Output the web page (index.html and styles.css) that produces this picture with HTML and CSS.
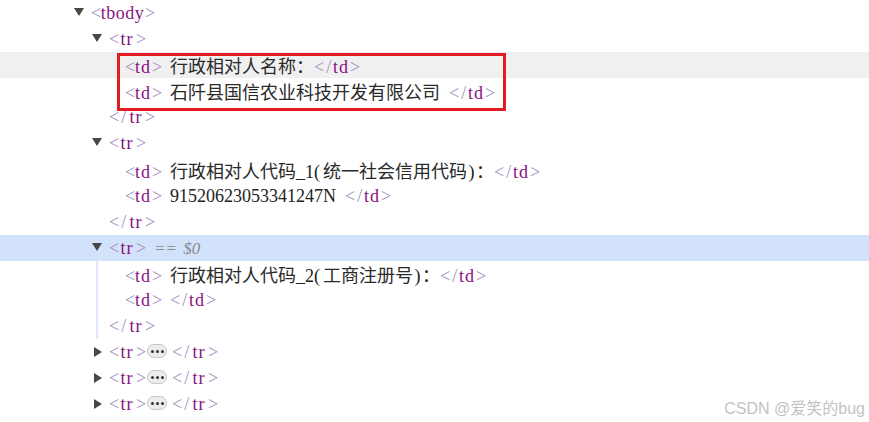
FILE: index.html
```html
<!DOCTYPE html>
<html lang="zh">
<head>
<meta charset="utf-8">
<title>Elements</title>
<link rel="stylesheet" href="styles.css">
</head>
<body>
<div class="tree">
  <div class="line lv0 arrowed"><span class="tw"><span class="tri-down"></span></span><span class="b o">&lt;</span><span class="t w5">tbody</span><span class="b o">&gt;</span></div>
  <div class="line lv1 arrowed"><span class="tw"><span class="tri-down"></span></span><span class="b o">&lt;</span><span class="t w2">tr</span><span class="b o">&gt;</span></div>
  <div class="line lv2 hover"><span class="b o">&lt;</span><span class="t w2">td</span><span class="b o">&gt;</span> <span class="c">行政相对人名称：</span><span class="b c2">&lt;/</span><span class="t w2">td</span><span class="b o">&gt;</span></div>
  <div class="line lv2"><span class="b o">&lt;</span><span class="t w2">td</span><span class="b o">&gt;</span> <span class="c">石阡县国信农业科技开发有限公司</span> <span class="b c2">&lt;/</span><span class="t w2">td</span><span class="b o">&gt;</span></div>
  <div class="line lv1"><span class="b c2">&lt;/</span><span class="t w2">tr</span><span class="b o">&gt;</span></div>
  <div class="line lv1 arrowed"><span class="tw"><span class="tri-down"></span></span><span class="b o">&lt;</span><span class="t w2">tr</span><span class="b o">&gt;</span></div>
  <div class="line lv2"><span class="b o">&lt;</span><span class="t w2">td</span><span class="b o">&gt;</span> <span class="c">行政相对人代码</span><span class="m w3">_1(</span><span class="c">统一社会信用代码</span><span class="m o">)</span><span class="c">：</span><span class="b c2">&lt;/</span><span class="t w2">td</span><span class="b o">&gt;</span></div>
  <div class="line lv2"><span class="b o">&lt;</span><span class="t w2">td</span><span class="b o">&gt;</span> <span class="num">91520623053341247N</span> <span class="b c2">&lt;/</span><span class="t w2">td</span><span class="b o">&gt;</span></div>
  <div class="line lv1"><span class="b c2">&lt;/</span><span class="t w2">tr</span><span class="b o">&gt;</span></div>
  <div class="line lv1 arrowed selected"><span class="tw"><span class="tri-down"></span></span><span class="b o">&lt;</span><span class="t w2">tr</span><span class="b o">&gt;</span> <span class="eq">== $0</span></div>
  <div class="group">
    <div class="line g2"><span class="b o">&lt;</span><span class="t w2">td</span><span class="b o">&gt;</span> <span class="c">行政相对人代码</span><span class="m w3">_2(</span><span class="c">工商注册号</span><span class="m o">)</span><span class="c">：</span><span class="b c2">&lt;/</span><span class="t w2">td</span><span class="b o">&gt;</span></div>
    <div class="line g2"><span class="b o">&lt;</span><span class="t w2">td</span><span class="b o">&gt;</span> <span class="b c2">&lt;/</span><span class="t w2">td</span><span class="b o">&gt;</span></div>
    <div class="line g1"><span class="b c2">&lt;/</span><span class="t w2">tr</span><span class="b o">&gt;</span></div>
  </div>
  <div class="line lv1 arrowed"><span class="tw"><span class="tri-right"></span></span><span class="b o">&lt;</span><span class="t w2">tr</span><span class="b o">&gt;</span><span class="pill"><i></i><i></i><i></i></span><span class="b c2">&lt;/</span><span class="t w2">tr</span><span class="b o">&gt;</span></div>
  <div class="line lv1 arrowed"><span class="tw"><span class="tri-right"></span></span><span class="b o">&lt;</span><span class="t w2">tr</span><span class="b o">&gt;</span><span class="pill"><i></i><i></i><i></i></span><span class="b c2">&lt;/</span><span class="t w2">tr</span><span class="b o">&gt;</span></div>
  <div class="line lv1 arrowed"><span class="tw"><span class="tri-right"></span></span><span class="b o">&lt;</span><span class="t w2">tr</span><span class="b o">&gt;</span><span class="pill"><i></i><i></i><i></i></span><span class="b c2">&lt;/</span><span class="t w2">tr</span><span class="b o">&gt;</span></div>
  <div class="redbox"></div>
</div>
<div class="watermark">CSDN @爱笑的bug</div>
</body>
</html>
```

FILE: styles.css
```css
html, body {
  margin: 0;
  padding: 0;
  background: #ffffff;
}
body {
  width: 869px;
  height: 422px;
  overflow: hidden;
  position: relative;
}
.tree {
  position: relative;
  padding-top: 0;
  font-family: "Liberation Serif", "Noto Sans CJK SC", serif;
  font-size: 18px;
  color: #222222;
  word-spacing: 4.5px;
}
.line {
  height: 26.1px;
  line-height: 26.1px;
  white-space: pre;
}
.lv0 { padding-left: 91px; }
.lv1 { padding-left: 109px; }
.lv2 { padding-left: 125px; }
.lv0.arrowed { padding-left: 74px; }
.lv1.arrowed { padding-left: 92px; }
.tw {
  display: inline-block;
  width: 17px;
  height: 10px;
  vertical-align: 1px;
}
.tri-down {
  display: block;
  width: 0;
  height: 0;
  border-left: 5px solid transparent;
  border-right: 5px solid transparent;
  border-top: 8px solid #474747;
}
.tri-right {
  display: block;
  width: 0;
  height: 0;
  margin-left: 2px;
  border-top: 5px solid transparent;
  border-bottom: 5px solid transparent;
  border-left: 8px solid #474747;
}
.b, .t, .m {
  display: inline-block;
  text-align: center;
  word-spacing: 0;
}
.o { width: 9px; }
.c2 { width: 18px; letter-spacing: 2px; text-align: right; }
.w2 { width: 18px; letter-spacing: 1px; }
.w3 { width: 27px; text-align: left; }
.w5 { width: 45px; letter-spacing: 0.5px; }
.b { color: #a28fbf; }
.t { color: #881280; }
.c {
  font-family: "Noto Sans CJK SC", sans-serif;
  font-size: 18px;
  color: #2a2a2a;
}
.hover { background: #f0f0f0; }
.selected { background: #d3e2fb; }
.eq {
  color: #8a8a8a;
  font-style: italic;
  font-size: 17px;
  word-spacing: 2px;
}
.group {
  margin-left: 96px;
  border-left: 2px solid #dde7f7;
}
.g2 { padding-left: 27px; }
.g1 { padding-left: 11px; }
.pill {
  display: inline-flex;
  align-items: center;
  justify-content: center;
  gap: 2px;
  width: 20px;
  height: 14px;
  box-sizing: border-box;
  margin: 0 5px 0 2px;
  border: 1px solid #c6c6c6;
  border-radius: 7px;
  background: #ececec;
  vertical-align: middle;
  position: relative;
  top: -3px;
}
.pill i {
  display: block;
  width: 3px;
  height: 3px;
  border-radius: 50%;
  background: #333333;
}
.redbox {
  position: absolute;
  left: 117px;
  top: 53px;
  width: 389px;
  height: 58px;
  box-sizing: border-box;
  border: 3px solid #e31b23;
}
.watermark {
  position: absolute;
  right: 4px;
  bottom: 3px;
  font-family: "Liberation Sans", "Noto Sans CJK SC", sans-serif;
  font-size: 16px;
  color: #c2c2c2;
}
```
